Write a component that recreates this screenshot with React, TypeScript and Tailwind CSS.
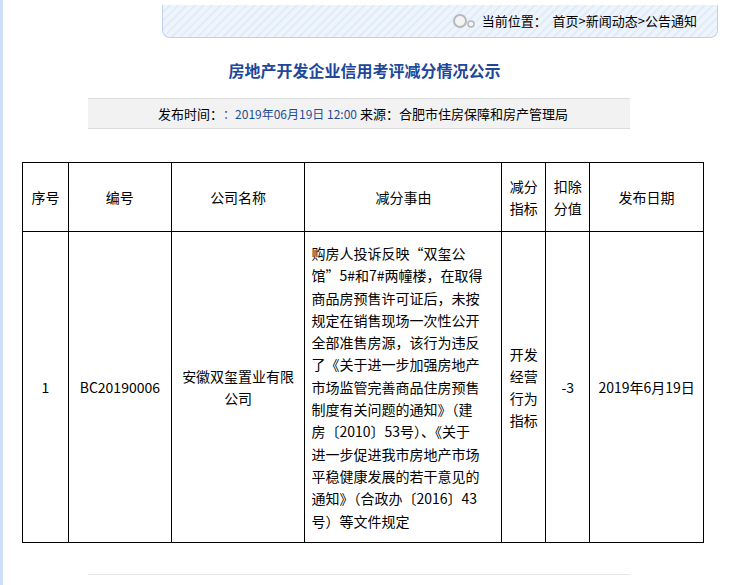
export default function App() {
  const f = { fontFamily: '"SimSun","Noto Sans CJK SC","Liberation Sans",sans-serif' };
  const body = ['购房人投诉反映“双玺公','馆”5#和7#两幢楼，在取得','商品房预售许可证后，未按','规定在销售现场一次性公开','全部准售房源，该行为违反','了《关于进一步加强房地产','市场监管完善商品住房预售','制度有关问题的通知》（建','房〔2010〕53号）、《关于','进一步促进我市房地产市场','平稳健康发展的若干意见的','通知》（合政办〔2016〕43','号）等文件规定'];
  return (
    <div className="relative w-[733px] h-[585px] bg-white text-[13px] text-black overflow-hidden" style={f}>
      <div className="absolute left-0 top-0 w-[3px] h-full bg-[#cfe0f6]" />
      <div className="flex justify-end pr-[15px] pt-[5px]">
        <div className="w-[556px] h-[33px] rounded-b-[8px] border border-t-0 border-[#bcd2ee] bg-[repeating-linear-gradient(135deg,#eef4fc_0px,#eef4fc_4px,#e2ecf9_4px,#e2ecf9_6px)] flex items-center justify-end pr-[20px] gap-[4px]">
          <svg width="26" height="16" viewBox="0 0 26 16"><circle cx="8" cy="8" r="6" fill="#f4f4f4" stroke="#b8b8b8" strokeWidth="2"/><circle cx="19" cy="11" r="3" fill="#f4f4f4" stroke="#b8b8b8" strokeWidth="1.5"/></svg>
          <span>当前位置：&nbsp;&nbsp;首页&gt;新闻动态&gt;公告通知</span>
        </div>
      </div>
      <div className="text-center text-[16px] font-bold text-[#21479b] mt-[20px] ml-[-4px]">房地产开发企业信用考评减分情况公示</div>
      <div className="mx-[88px] w-[542px] mt-[16px] h-[31px] bg-[#f2f2f2] border-y border-[#dcdcdc] flex items-center justify-center pl-[8px]">
        发布时间：<span className="text-[#1d4f96] text-[12px]">：2019年06月19日 12:00</span>&nbsp;来源：合肥市住房保障和房产管理局
      </div>
      <table className="ml-[22px] mt-[33px] border-collapse text-[14px]" style={{ width: 682 }}>
        <colgroup>
          <col style={{ width: 46 }} /><col style={{ width: 103 }} /><col style={{ width: 134 }} /><col style={{ width: 197 }} /><col style={{ width: 44 }} /><col style={{ width: 44 }} /><col style={{ width: 114 }} />
        </colgroup>
        <tbody>
          <tr className="h-[69px] text-center leading-[22px]">
            {['序号','编号','公司名称','减分事由'].map(t => <td key={t} className="border border-black">{t}</td>)}
            <td className="border border-black">减分<br/>指标</td>
            <td className="border border-black">扣除<br/>分值</td>
            <td className="border border-black">发布日期</td>
          </tr>
          <tr className="text-center leading-[22px]">
            <td className="border border-black">1</td>
            <td className="border border-black">BC20190006</td>
            <td className="border border-black">安徽双玺置业有限<br/>公司</td>
            <td className="border border-black text-left px-[6px] pt-[10px] pb-[10px] leading-[22.3px]">{body.map((l,i)=><div key={i} className="whitespace-nowrap">{l}</div>)}</td>
            <td className="border border-black">开发<br/>经营<br/>行为<br/>指标</td>
            <td className="border border-black">-3</td>
            <td className="border border-black">2019年6月19日</td>
          </tr>
        </tbody>
      </table>
      <div className="ml-[88px] w-[542px] mt-[31px] border-t border-[#e6e6e6]" />
    </div>
  );
}
